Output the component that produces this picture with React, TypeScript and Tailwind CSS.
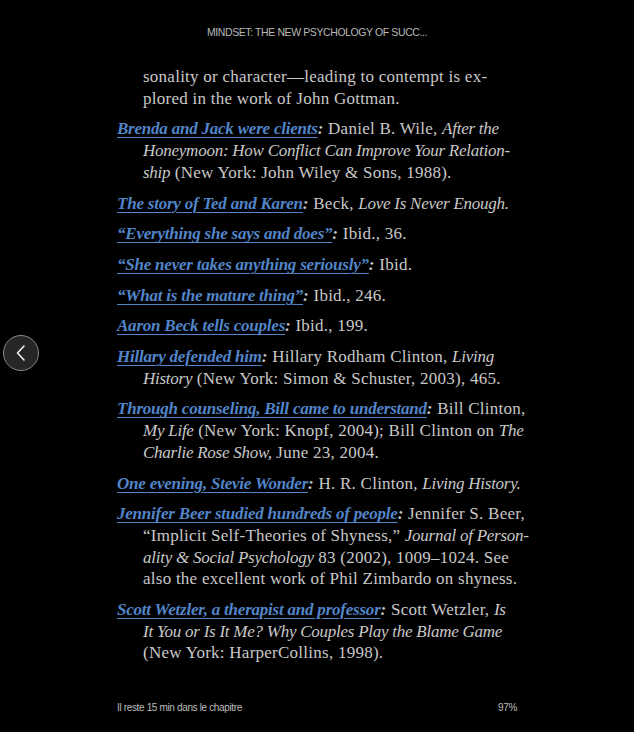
import React from "react";

type Line = React.ReactNode;

type Note = {
  cue?: string;
  lines: Line[];
};

// italic runs in the notes are a touch narrower than the roman text
const I = ({ children }: { children: React.ReactNode }) => <i className="tracking-[-0.25px]">{children}</i>;

// each line is placed by hand so the wrap and the hyphens follow the page
const notes: Note[] = [
  {
    lines: ["sonality or character—leading to contempt is ex-", "plored in the work of John Gottman."],
  },
  {
    cue: "Brenda and Jack were clients",
    lines: [
      <>
        {" "}Daniel B. Wile, <I>After the</I>
      </>,
      <I>Honeymoon: How Conflict Can Improve Your Relation-</I>,
      <>
        <I>ship</I> (New York: John Wiley &amp; Sons, 1988).
      </>,
    ],
  },
  {
    cue: "The story of Ted and Karen",
    lines: [
      <>
        {" "}Beck, <I>Love Is Never Enough.</I>
      </>,
    ],
  },
  { cue: "“Everything she says and does”", lines: [" Ibid., 36."] },
  { cue: "“She never takes anything seriously”", lines: [" Ibid."] },
  { cue: "“What is the mature thing”", lines: [" Ibid., 246."] },
  { cue: "Aaron Beck tells couples", lines: [" Ibid., 199."] },
  {
    cue: "Hillary defended him",
    lines: [
      <>
        {" "}Hillary Rodham Clinton, <I>Living</I>
      </>,
      <>
        <I>History</I> (New York: Simon &amp; Schuster, 2003), 465.
      </>,
    ],
  },
  {
    cue: "Through counseling, Bill came to understand",
    lines: [
      " Bill Clinton,",
      <>
        <I>My Life</I> (New York: Knopf, 2004); Bill Clinton on <I>The</I>
      </>,
      <>
        <I>Charlie Rose Show,</I> June 23, 2004.
      </>,
    ],
  },
  {
    cue: "One evening, Stevie Wonder",
    lines: [
      <>
        {" "}H. R. Clinton, <I>Living History.</I>
      </>,
    ],
  },
  {
    cue: "Jennifer Beer studied hundreds of people",
    lines: [
      " Jennifer S. Beer,",
      <>
        “Implicit Self-Theories of Shyness,” <I>Journal of Person-</I>
      </>,
      <>
        <I>ality &amp; Social Psychology</I> 83 (2002), 1009–1024. See
      </>,
      "also the excellent work of Phil Zimbardo on shyness.",
    ],
  },
  {
    cue: "Scott Wetzler, a therapist and professor",
    lines: [
      <>
        {" "}Scott Wetzler, <I>Is</I>
      </>,
      <I>It You or Is It Me? Why Couples Play the Blame Game</I>,
      "(New York: HarperCollins, 1998).",
    ],
  },
];

const NoteEntry = ({ cue, lines }: Note) => {
  const [first, ...rest] = lines;
  return (
    <div className="mb-[9px] whitespace-nowrap">
      <div className={cue ? "" : "pl-[26px]"}>
        {cue && (
          <>
            <span className="font-bold italic tracking-[-0.22px] text-[#5285c8] underline decoration-[1px] underline-offset-[3px]">
              {cue}
            </span>
            <span className="font-bold italic">:</span>
          </>
        )}
        {first}
      </div>
      {rest.map((line, i) => (
        <div key={i} className="pl-[26px]">
          {line}
        </div>
      ))}
    </div>
  );
};

export default function App() {
  return (
    <div className="relative flex h-[732px] w-[634px] flex-col overflow-hidden bg-black">
      <header className="pt-[26px] text-center font-['Liberation_Sans',Arial,sans-serif] text-[10.5px] leading-[13px] tracking-[-0.4px] text-[#b8b8b8]">
        MINDSET: THE NEW PSYCHOLOGY OF SUCC...
      </header>
      <main className="flex-1 pl-[117px] pt-[27px] font-['Liberation_Serif','DejaVu_Serif',serif] text-[17px] leading-[21.7px] tracking-[0.25px] text-[#c8c8c8]">
        {notes.map((n, i) => (
          <NoteEntry key={i} {...n} />
        ))}
      </main>
      <footer className="flex w-[517px] justify-between pb-[18px] pl-[117px] font-['Liberation_Sans',Arial,sans-serif] text-[10px] leading-[12px] tracking-[-0.35px] text-[#bdbdbd]">
        <span>Il reste 15 min dans le chapitre</span>
        <span>97%</span>
      </footer>

      <button className="absolute left-[3px] top-[335px] flex h-[36px] w-[36px] items-center justify-center rounded-full border border-[#8a8a8a] bg-[#262626]">
        <svg width="14" height="18" viewBox="0 0 14 18" fill="none">
          <path d="M10 2 L3.5 9 L10 16" stroke="#f0f0f0" strokeWidth="1.6" strokeLinecap="round" strokeLinejoin="round" />
        </svg>
      </button>
    </div>
  );
}
